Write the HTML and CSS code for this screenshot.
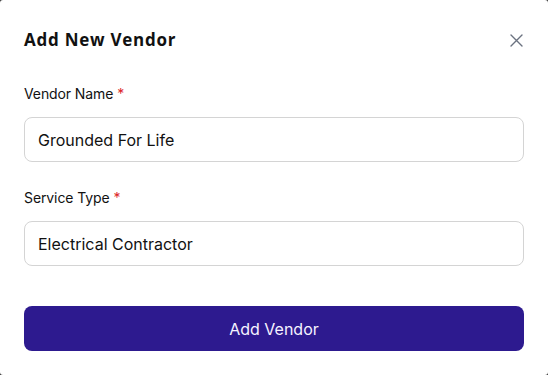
FILE: index.html
```html
<!DOCTYPE html>
<html lang="en">
<head>
  <meta charset="UTF-8" />
  <meta name="viewport" content="width=device-width, initial-scale=1" />
  <title>Add New Vendor</title>
  <link rel="stylesheet" href="styles.css">
</head>
<body>

  <!-- Modal -->
  <div class="modal">
    <div class="modal-header">
      <h2>Add New Vendor</h2>
      <button class="close-btn" aria-label="Close">
        <svg width="13" height="13" viewBox="0 0 13 13">
          <path d="M1 1 L12 12 M12 1 L1 12" stroke="#6b7280" stroke-width="1.4" stroke-linecap="round" fill="none" />
        </svg>
      </button>
    </div>

    <div class="field">
      <label for="vendorName">Vendor Name <span class="req">*</span></label>
      <input type="text" id="vendorName" value="Grounded For Life" />
    </div>

    <div class="field">
      <label for="serviceType">Service Type <span class="req">*</span></label>
      <input type="text" id="serviceType" value="Electrical Contractor" />
    </div>

    <button class="submit-btn">Add Vendor</button>
  </div>

</body>
</html>
```

FILE: styles.css
```css
html, body {
  margin: 0;
  background: #3a3a3a;
}
body {
  font-family: Inter, 'Noto Sans', sans-serif;
  color: #111;
}
.modal {
  box-sizing: border-box;
  width: 548px;
  height: 375px;
  background: white;
  border-radius: 3px;
  padding: 28px 24px 24px;
}
.modal-header {
  display: flex;
  align-items: center;
  justify-content: space-between;
  margin-bottom: 32px;
}
.modal-header h2 {
  margin: 0;
  font-family: 'Open Sans', sans-serif;
  font-size: 17px;
  font-weight: 700;
  letter-spacing: 0.75px;
  line-height: 24px;
  color: #111;
}
.close-btn {
  background: none;
  border: none;
  padding: 0;
  margin-right: 1px;
  width: 13px;
  height: 13px;
  cursor: pointer;
  display: flex;
}
.field {
  margin-bottom: 26px;
}
.field label {
  display: block;
  font-size: 14px;
  line-height: 20px;
  margin-bottom: 13px;
  color: #111;
  letter-spacing: -0.1px;
}
.req {
  color: #dc2626;
}
.field input {
  box-sizing: border-box;
  width: 100%;
  height: 45px;
  border: 1px solid #d4d4d4;
  border-radius: 8px;
  padding: 0 13px;
  font-family: Inter, 'Noto Sans', sans-serif;
  font-size: 16px;
  color: #111;
  outline: none;
}
.submit-btn {
  display: block;
  width: 100%;
  height: 45px;
  margin-top: 40px;
  border: none;
  border-radius: 8px;
  background: #2d1a8f;
  color: #f5f3ff;
  font-family: Inter, 'Noto Sans', sans-serif;
  font-size: 16px;
  cursor: pointer;
}
```
